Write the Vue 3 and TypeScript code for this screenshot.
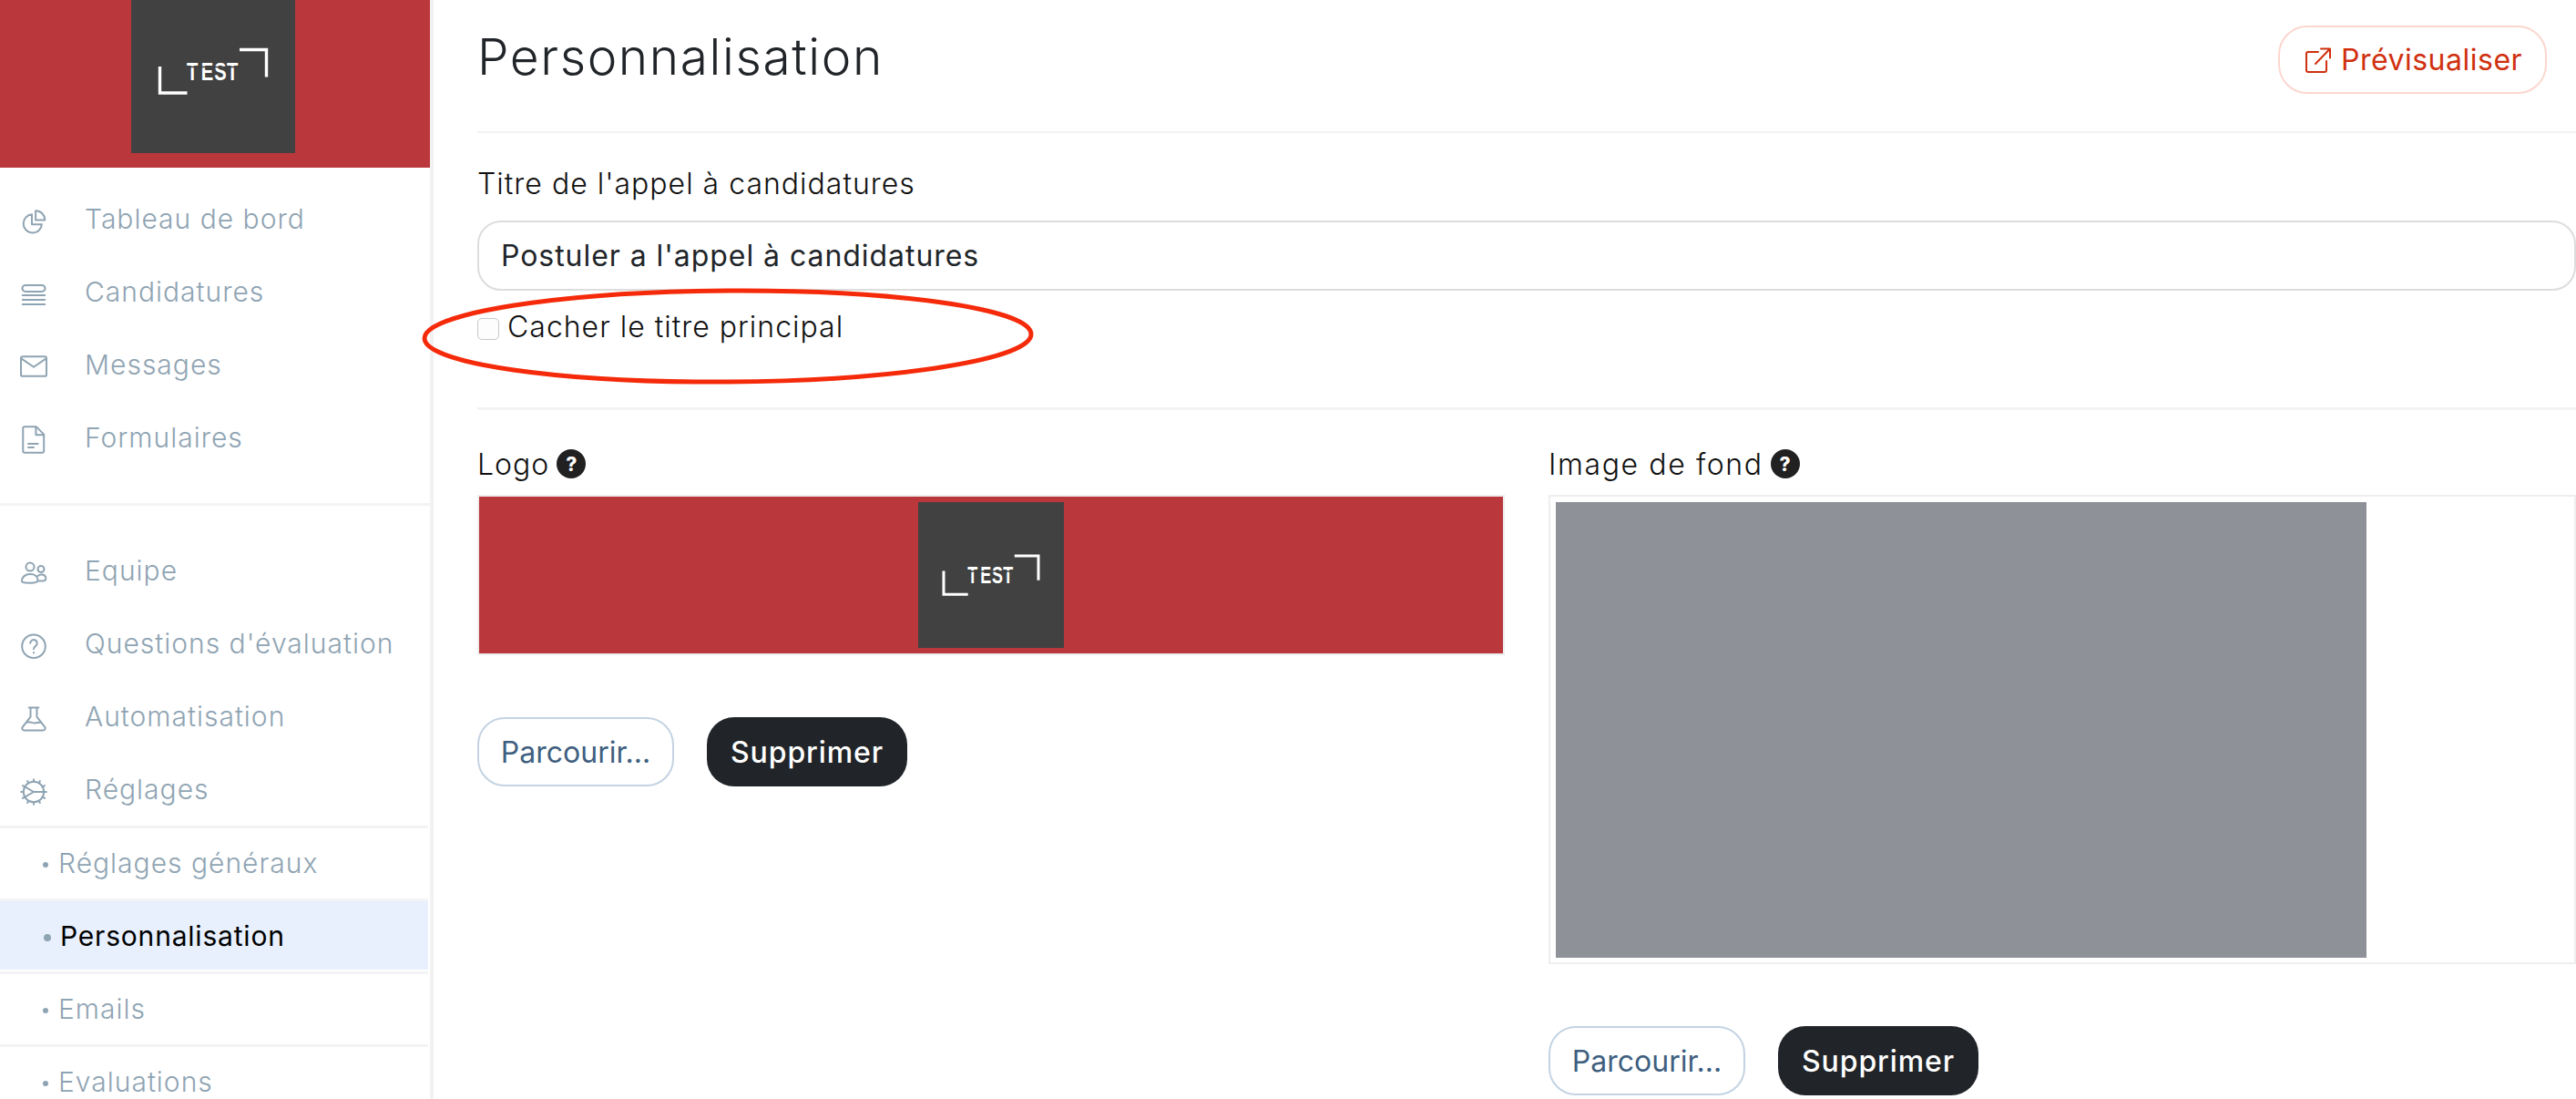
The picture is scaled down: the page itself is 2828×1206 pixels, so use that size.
<script setup lang="ts">
interface NavItem {
  label: string
  paths: string[]
}

const mainNav: NavItem[] = [
  { label: 'Tableau de bord', paths: ['M10.5 6.2a7.6 7.6 0 1 0 8.2 8.2h-8.2z', 'M13.6 3.2v7.6h7.6a7.6 7.6 0 0 0-7.6-7.6z'] },
  { label: 'Candidatures', paths: ['M5.200 4.500h13.600a2.600 2.600 0 0 1 0 5.200H5.200a2.600 2.600 0 0 1 0-5.200z', 'M2.800 12.750h18.400', 'M2.800 16.500h18.400', 'M2.800 20.250h18.400'] },
  { label: 'Messages', paths: ['M2.900 3.200h18.200a1.400 1.400 0 0 1 1.400 1.400v13.400a1.400 1.400 0 0 1-1.400 1.400H2.900a1.400 1.400 0 0 1-1.400-1.400V4.600a1.400 1.400 0 0 1 1.400-1.400z', 'M2 5l10 6.800L22 5'] },
  { label: 'Formulaires', paths: ['M4.400 1h9.800l6.200 6.200v14a1.200 1.200 0 0 1-1.200 1.200H4.400a1.200 1.200 0 0 1-1.200-1.200V2.200A1.200 1.200 0 0 1 4.400 1z', 'M13.800 1.200v6.400h6.400', 'M7.500 15h8', 'M7.500 18h4.500'] },
]

const adminNav: NavItem[] = [
  { label: 'Equipe', paths: ['M9 3.4a3.4 3.4 0 1 1 0 6.8 3.4 3.4 0 0 1 0-6.8z', 'M18 6a2.6 2.6 0 1 1 0 5.2A2.6 2.6 0 0 1 18 6z', 'M2.2 18.4c0-3.4 3-5.6 6.8-5.6s6.4 2 6.4 5c0 1.6-1.6 2.2-6.4 2.2s-6.8-.2-6.8-1.6z', 'M15.4 14.2c1-.7 1.9-1 3-1 2.4 0 3.6 1.6 3.6 3.4 0 1.3-1.4 1.8-3.6 1.8h-3'] },
  { label: "Questions d'évaluation", paths: ['M12 2.6a9.6 9.6 0 1 1 0 19.2 9.6 9.6 0 0 1 0-19.2z', 'M9.2 9.6a2.8 2.8 0 1 1 4.4 2.3c-1 .7-1.6 1.2-1.6 2.5', 'M12 17.2v.4'] },
  { label: 'Automatisation', paths: ['M8 2.6h8', 'M9.4 2.8v7.4L2.8 18.6c-.9 1.3 0 2.8 1.6 2.8h15.2c1.6 0 2.5-1.5 1.6-2.8l-6.6-8.4V2.8', 'M6 14.8c3-1.2 5 1 7.6.4 1.4-.3 2.6-.6 4.2-.4'] },
  {
    label: 'Réglages',
    paths: [
      'M12 3.600a8.400 8.400 0 1 1 0 16.800 8.400 8.400 0 0 1 0-16.800z',
      'M5 8l7 4-7 4',
      'M12 12h8',
      'M20.600 12h1.800M19.450 7.700l1.550-.900M16.300 4.550l.900-1.550M12 3.400V1.600M7.700 4.550L6.800 3M4.550 7.700L3 6.800M3.400 12H1.600M4.550 16.300L3 17.200M7.700 19.450L6.800 21M12 20.600v1.800M16.300 19.450l.900 1.550M19.450 16.300l1.550.900',
    ],
  },
]

const subNav = ['Réglages généraux', 'Personnalisation', 'Emails', 'Evaluations']
</script>

<template>
  <div class="page">
    <aside class="sidebar">
      <div class="brand">
        <svg class="brand-logo" viewBox="0 0 180 180">
          <rect width="180" height="180" fill="#414141" />
          <path d="M31.500 85v29h30M119 66.500h29.500v30" fill="none" stroke="#fff" stroke-width="3.400" />
          <text transform="translate(61 100) scale(.72 1)" x="0 22 42 61" class="logo-text">TEST</text>
          <path d="M60 85.500h62" stroke="#414141" stroke-width="1.600" />
        </svg>
      </div>

      <nav class="nav nav-main">
        <a v-for="item in mainNav" :key="item.label" class="nav-row">
          <svg class="nav-icon" viewBox="0 0 24 24">
            <path v-for="d in item.paths" :key="d" :d="d" />
          </svg>
          <span>{{ item.label }}</span>
        </a>
      </nav>

      <nav class="nav nav-admin">
        <a v-for="item in adminNav" :key="item.label" class="nav-row">
          <svg class="nav-icon" viewBox="0 0 24 24">
            <path v-for="d in item.paths" :key="d" :d="d" />
          </svg>
          <span>{{ item.label }}</span>
        </a>
      </nav>

      <div class="subnav">
        <div v-for="label in subNav" :key="label" class="sub-row">
          <a class="sub-link" :class="{ active: label === 'Personnalisation' }">
            <i class="sub-dot"></i>{{ label }}
          </a>
        </div>
      </div>
    </aside>

    <main class="content">
      <header class="head">
        <h1>Personnalisation</h1>
        <button class="btn-preview">
          <svg viewBox="0 0 30 30" width="30" height="30">
            <path d="M15 6H4a2 2 0 0 0-2 2v18a2 2 0 0 0 2 2h18a2 2 0 0 0 2-2V16M12 19L27.500 3M18 2.500h10v10" />
          </svg>
          Prévisualiser
        </button>
      </header>

      <section class="title-block">
        <label class="field-label">Titre de l'appel à candidatures</label>
        <input class="text-input" type="text" value="Postuler a l'appel à candidatures" />
        <label class="check-row">
          <input type="checkbox" />
          <span>Cacher le titre principal</span>
        </label>
        <svg class="ring" viewBox="0 0 680 110" width="680" height="110">
          <ellipse cx="336" cy="54" rx="333" ry="50" transform="rotate(-0.4 336 54)" />
        </svg>
      </section>

      <section class="media-grid">
        <div class="media-col">
          <div class="media-label">Logo <b class="help">?</b></div>
          <div class="logo-box">
            <svg class="box-logo" viewBox="0 0 180 180">
              <rect width="180" height="180" fill="#414141" />
              <path d="M31.500 85v29h30M119 66.500h29.500v30" fill="none" stroke="#fff" stroke-width="3.400" />
              <text transform="translate(61 100) scale(.72 1)" x="0 22 42 61" class="logo-text">TEST</text>
              <path d="M60 85.500h62" stroke="#414141" stroke-width="1.600" />
            </svg>
          </div>
          <div class="actions">
            <button class="btn-browse">Parcourir...</button>
            <button class="btn-delete">Supprimer</button>
          </div>
        </div>

        <div class="media-col">
          <div class="media-label wide">Image de fond <b class="help">?</b></div>
          <div class="image-box">
            <div class="image-fill"></div>
          </div>
          <div class="actions">
            <button class="btn-browse">Parcourir...</button>
            <button class="btn-delete">Supprimer</button>
          </div>
        </div>
      </section>
    </main>
  </div>
</template>

<style>
html,
body {
  margin: 0;
  background: #fff;
  overflow: hidden;
}
</style>

<style scoped>
.page {
  display: flex;
  width: 2828px;
  height: 1206px;
  overflow: hidden;
  font-family: Inter, "Open Sans", sans-serif;
  background: #fff;
}

/* ===== sidebar ===== */
.sidebar {
  flex: 0 0 476px;
  box-sizing: border-box;
  border-right: 4px solid #f2f2f2;
  overflow: hidden;
}
.brand {
  height: 184px;
  background: #ba373b;
  overflow: hidden;
  display: flex;
  justify-content: center;
  align-items: flex-start;
}
.brand-logo {
  display: block;
  flex: none;
  width: 180px;
  height: 180px;
  margin: -12px 4px 0 0;
}
.logo-text {
  font-family: "Liberation Sans", sans-serif;
  font-weight: 700;
  font-size: 28px;
  fill: #fff;
}
.nav-main {
  padding: 16px 0 32px;
  border-bottom: 3px solid #f2f3f5;
}
.nav-admin {
  padding-top: 31px;
}
.nav-row {
  display: flex;
  align-items: center;
  height: 80px;
  color: #8fa4b3;
  font-size: 30px;
  font-weight: 300;
  letter-spacing: 1px;
}
.nav-icon {
  flex: none;
  width: 32px;
  height: 32px;
  margin: 6px 40px 0 21px;
  fill: none;
  stroke: #8fa4b3;
  stroke-width: 1.5;
  stroke-linecap: round;
  stroke-linejoin: round;
}
.sub-row {
  height: 80px;
  box-sizing: border-box;
  border-top: 3px solid #f2f3f5;
  padding-bottom: 2px;
  margin-right: 2px;
}
.sub-link {
  display: flex;
  align-items: center;
  height: 100%;
  padding-left: 47px;
  color: #8fa4b3;
  font-size: 30px;
  font-weight: 300;
  letter-spacing: 1px;
}
.sub-dot {
  width: 6px;
  height: 6px;
  border-radius: 50%;
  background: #8fa4b3;
  margin: 4px 11px 0 0;
}
.sub-link.active {
  background: #e8f0fe;
  color: #000;
  font-weight: 400;
  letter-spacing: 0.8px;
}
.sub-link.active .sub-dot {
  width: 8px;
  height: 8px;
  margin: 4px 10px 0 1px;
}

/* ===== main ===== */
.content {
  flex: 1;
  min-width: 0;
  padding-left: 48px;
  color: #212529;
}
.head {
  display: flex;
  justify-content: space-between;
  align-items: flex-start;
  height: 146px;
  box-sizing: border-box;
  padding: 28px 32px 0 0;
  border-bottom: 2px solid #f3f3f4;
}
h1 {
  margin: 0;
  font-size: 55px;
  line-height: 68px;
  font-weight: 300;
  letter-spacing: 1.6px;
  color: #212529;
}
.btn-preview {
  display: flex;
  align-items: center;
  gap: 10px;
  width: 295px;
  height: 75px;
  box-sizing: border-box;
  padding: 0 0 0 27px;
  border: 2px solid #fbd7cf;
  border-radius: 32px;
  background: #fff;
  color: #d0300f;
  font-family: inherit;
  font-size: 32px;
  font-weight: 400;
  letter-spacing: 0.5px;
  white-space: nowrap;
}
.btn-preview svg {
  flex: none;
  fill: none;
  stroke: #d0300f;
  stroke-width: 2;
  stroke-linecap: round;
  stroke-linejoin: round;
}
.title-block {
  position: relative;
  height: 304px;
  box-sizing: border-box;
  padding-top: 35px;
  border-bottom: 3px solid #f3f3f4;
}
.field-label {
  display: block;
  font-size: 32px;
  line-height: 42px;
  font-weight: 300;
  letter-spacing: 1px;
  color: #111;
}
.text-input {
  display: block;
  width: 100%;
  height: 77px;
  box-sizing: border-box;
  margin-top: 19px;
  padding: 0 24px;
  border: 2px solid #dddddd;
  border-radius: 26px;
  outline: none;
  font-family: inherit;
  font-size: 32px;
  font-weight: 400;
  letter-spacing: 0.95px;
  color: #212529;
}
.check-row {
  display: flex;
  align-items: center;
  gap: 9px;
  margin-top: 20px;
  font-size: 32px;
  line-height: 40px;
  font-weight: 300;
  letter-spacing: 1px;
  color: #111;
}
.check-row input {
  appearance: none;
  width: 24px;
  height: 24px;
  margin: 3px 0 0;
  border: 1px solid #c8c8c8;
  border-radius: 5px;
  background: #fdfdfd;
}
.ring {
  position: absolute;
  left: -61px;
  top: 169px;
  pointer-events: none;
}
.ring ellipse {
  fill: none;
  stroke: #f52a0a;
  stroke-width: 5;
}
.media-grid {
  display: grid;
  grid-template-columns: 1128px 1128px;
  column-gap: 48px;
  padding-top: 40px;
}
.media-label {
  display: flex;
  align-items: center;
  gap: 8px;
  height: 38px;
  margin-bottom: 15px;
  font-size: 32px;
  font-weight: 300;
  letter-spacing: 1px;
  color: #111;
}
.media-label.wide {
  letter-spacing: 1.6px;
}
.help {
  display: flex;
  align-items: center;
  justify-content: center;
  width: 32px;
  height: 32px;
  border-radius: 50%;
  background: #212121;
  color: #fff;
  font-size: 21px;
  font-weight: 800;
  letter-spacing: 0;
}
.logo-box {
  display: flex;
  justify-content: center;
  align-items: center;
  height: 176px;
  box-sizing: border-box;
  border: 2px solid #eeeeee;
  background: #ba373b;
  background-clip: padding-box;
}
.box-logo {
  display: block;
  width: 160px;
  height: 160px;
}
.image-box {
  height: 515px;
  box-sizing: border-box;
  padding: 6px;
  border: 2px solid #eeeeee;
}
.image-fill {
  width: 890px;
  height: 500px;
  background: #8f9199;
}
.actions {
  display: flex;
  gap: 36px;
  margin-top: 68px;
}
.btn-browse,
.btn-delete {
  height: 76px;
  box-sizing: border-box;
  border-radius: 30px;
  font-family: inherit;
  font-size: 32px;
  white-space: nowrap;
}
.btn-browse {
  width: 216px;
  border: 2px solid #c3d3e3;
  background: #fff;
  color: #3f5f80;
  font-weight: 400;
}
.btn-delete {
  width: 220px;
  border: none;
  background: #212529;
  color: #fff;
  font-weight: 500;
  letter-spacing: 0.9px;
}
</style>
